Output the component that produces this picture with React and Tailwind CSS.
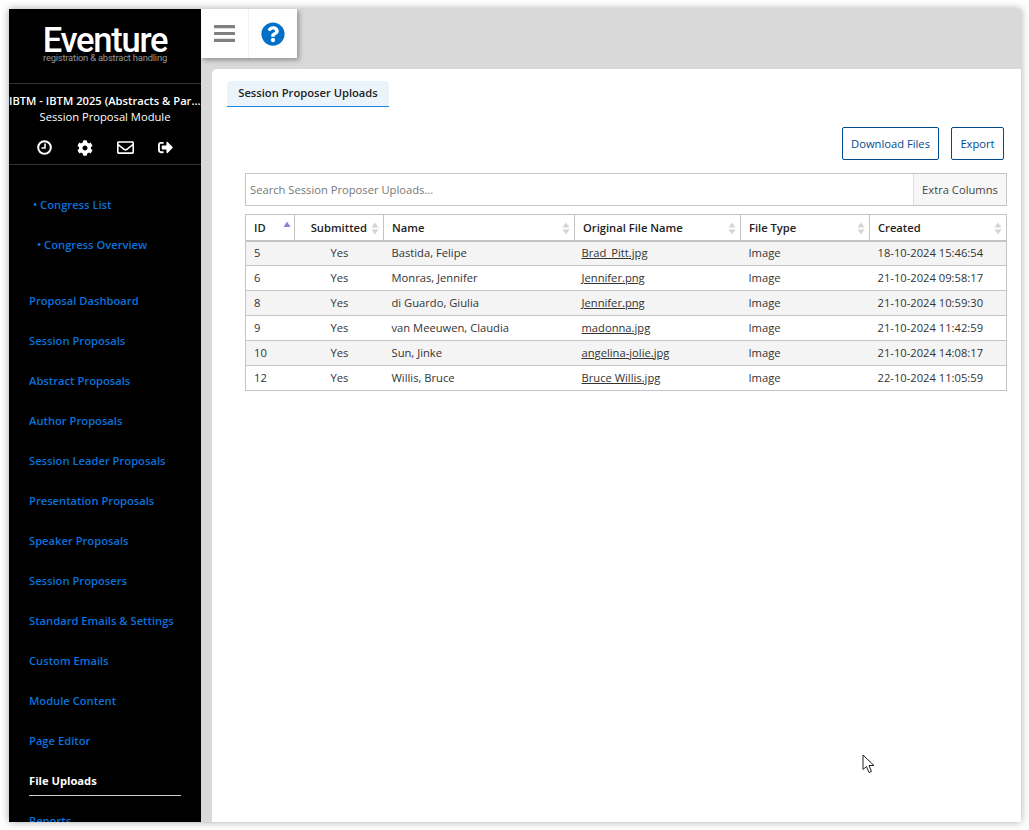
import { FaQuestionCircle, FaCog, FaRegEnvelope, FaSignOutAlt } from "react-icons/fa";

const topLinks = [
  { label: "• Congress List", indent: "pl-[24px]" },
  { label: "• Congress Overview", indent: "pl-[28px]" },
];

const navLinks = [
  "Proposal Dashboard",
  "Session Proposals",
  "Abstract Proposals",
  "Author Proposals",
  "Session Leader Proposals",
  "Presentation Proposals",
  "Speaker Proposals",
  "Session Proposers",
  "Standard Emails & Settings",
  "Custom Emails",
  "Module Content",
  "Page Editor",
];

const columns = [
  { label: "ID", width: "w-[49px]", sorted: true },
  { label: "Submitted", width: "w-[89px]", right: true },
  { label: "Name", width: "w-[191px]" },
  { label: "Original File Name", width: "w-[166px]" },
  { label: "File Type", width: "w-[129px]" },
  { label: "Created", width: "w-[137px]" },
];

const rows = [
  { id: 5, name: "Bastida, Felipe", file: "Brad_Pitt.jpg", created: "18-10-2024 15:46:54" },
  { id: 6, name: "Monras, Jennifer", file: "Jennifer.png", created: "21-10-2024 09:58:17" },
  { id: 8, name: "di Guardo, Giulia", file: "Jennifer.png", created: "21-10-2024 10:59:30" },
  { id: 9, name: "van Meeuwen, Claudia", file: "madonna.jpg", created: "21-10-2024 11:42:59" },
  { id: 10, name: "Sun, Jinke", file: "angelina-jolie.jpg", created: "21-10-2024 14:08:17" },
  { id: 12, name: "Willis, Bruce", file: "Bruce Willis.jpg", created: "22-10-2024 11:05:59" },
];

function SortArrows({ active }) {
  if (active) {
    return (
      <svg className="absolute right-[3px] top-[6px]" width="8" height="7" viewBox="0 0 8 7">
        <path d="M4 0.5 L7.5 6 L0.5 6 Z" fill="#8585e0" />
      </svg>
    );
  }
  return (
    <svg className="absolute right-[4px] top-[7px]" width="8" height="13" viewBox="0 0 8 13">
      <path d="M4 0.5 L7.5 5.5 L0.5 5.5 Z" fill="#d4d4d4" />
      <path d="M4 12.5 L7.5 7.5 L0.5 7.5 Z" fill="#d4d4d4" />
    </svg>
  );
}

function Sidebar() {
  return (
    <aside className="w-[192px] shrink-0 bg-black overflow-hidden">
      <div className="h-[75px] border-b border-[#333] flex flex-col items-center pt-[17px]">
        <div className="text-white text-[34.5px] leading-[28px] tracking-[-1.25px] font-['Roboto'] font-medium">Eventure</div>
        <div className="text-[#999] text-[9.4px] leading-[8px] font-['Roboto'] tracking-[-0.2px] whitespace-nowrap">registration &amp; abstract handling</div>
      </div>
      <div className="h-[81px] border-b border-[#333] pt-[9px] text-white text-center">
        <div className="text-[11.2px] leading-[16px] font-semibold truncate">IBTM - IBTM 2025 (Abstracts &amp; Participants)</div>
        <div className="text-[11.2px] leading-[15px]">Session Proposal Module</div>
        <div className="flex items-center mt-[15px] pl-[28px] gap-[24px]">
          <svg className="w-[15px] h-[15px] mr-[1px]" viewBox="0 0 15 15" fill="none" stroke="currentColor">
            <circle cx="7.5" cy="7.5" r="6.3" strokeWidth="2" />
            <path d="M8 3.5 V8 H4.5" strokeWidth="1.6" />
          </svg>
          <FaCog className="w-[16px] h-[16px]" />
          <FaRegEnvelope className="w-[17px] h-[17px]" />
          <FaSignOutAlt className="w-[15px] h-[15px]" />
        </div>
      </div>
      <div className="pt-[20px]">
        {topLinks.map((link) => (
          <div key={link.label} className={`h-[40px] ${link.indent} flex items-center text-[#0a72dc] text-[11.2px] font-semibold`}>
            {link.label}
          </div>
        ))}
      </div>
      <nav className="pt-[16px] px-[20px]">
        {navLinks.map((item) => (
          <div key={item} className="h-[40px] flex items-center text-[#0a72dc] text-[11.2px] font-semibold whitespace-nowrap">
            {item}
          </div>
        ))}
        <div className="h-[35px] pt-[7px] flex items-center text-white text-[11.2px] font-bold border-b border-[#ccc]">File Uploads</div>
        <div className="h-[40px] mt-[5px] flex items-center text-[#0a72dc] text-[11.2px] font-semibold">Reports</div>
      </nav>
    </aside>
  );
}

function UploadsTable() {
  return (
    <table className="table-fixed border-collapse w-[761px] mt-[8px] text-[11.2px] text-[#333]">
      <thead>
        <tr className="h-[26px] border-b-2 border-[#c4c4c4]">
          {columns.map((col) => (
            <th
              key={col.label}
              className={`relative ${col.width} border border-[#c4c4c4] border-b-0 font-semibold text-[#222] px-[8px] pt-[2px] ${col.right ? "text-right pr-[16px]" : "text-left"}`}
            >
              {col.label}
              <SortArrows active={col.sorted} />
            </th>
          ))}
        </tr>
      </thead>
      <tbody>
        {rows.map((row, i) => (
          <tr key={row.id} className={`h-[25px] border border-[#c4c4c4] ${i % 2 === 0 ? "bg-[#f4f4f4]" : "bg-white"}`}>
            <td className="px-[8px]">{row.id}</td>
            <td className="px-[8px] pl-[36px]">Yes</td>
            <td className="px-[8px]">{row.name}</td>
            <td className="pl-[7px] pr-[8px] underline">{row.file}</td>
            <td className="px-[8px]">Image</td>
            <td className="px-[8px]">{row.created}</td>
          </tr>
        ))}
      </tbody>
    </table>
  );
}

export default function App() {
  return (
    <div className="relative w-[1029px] h-[830px] bg-white p-[9px] pr-[8px] pb-[8px] overflow-hidden font-['Open_Sans',sans-serif]">
      <div className="flex h-full bg-[#d9d9d9] shadow-[0_0_8px_rgba(0,0,0,0.35)] overflow-hidden">
        <Sidebar />
        <div className="flex-1 min-w-0 flex flex-col">
          <header className="h-[49px] w-[96px] flex shrink-0 bg-white shadow-[2px_2px_5px_rgba(0,0,0,0.35)]">
            <div className="w-[48px] flex items-center justify-center border-r border-[#f0f0f0] text-[#808080]">
              <svg width="21" height="17" viewBox="0 0 21 17" fill="currentColor">
                <rect x="0" y="0" width="21" height="3.2" rx="0.5" />
                <rect x="0" y="6.9" width="21" height="3.2" rx="0.5" />
                <rect x="0" y="13.8" width="21" height="3.2" rx="0.5" />
              </svg>
            </div>
            <div className="w-[48px] flex items-center justify-center text-[#0070c9]">
              <FaQuestionCircle className="w-[24px] h-[24px]" />
            </div>
          </header>
          <main className="mt-[11px] ml-[11px] flex-1 bg-white rounded-tl-[5px] pt-[12px] pl-[15px]">
            <div className="flex w-[162px] items-center justify-center h-[26px] bg-[#ebf4fb] border-b border-[#1e88e5] rounded-t-[3px] text-[11.2px] font-semibold text-[#222]">
              Session Proposer Uploads
            </div>
            <div className="flex justify-end gap-[12px] mt-[20px] pr-[17px]">
              <button className="h-[33px] w-[97px] pt-[2px] border border-[#004a8f] rounded-[2px] text-[11.2px] text-[#004a8f]">Download Files</button>
              <button className="h-[33px] w-[53px] pt-[2px] border border-[#004a8f] rounded-[2px] text-[11.2px] text-[#004a8f]">Export</button>
            </div>
            <div className="ml-[18px] w-[762px]">
              <div className="flex h-[33px] mt-[13px] border border-[#c4c4c4] text-[11.2px]">
                <div className="flex-1 flex items-center pl-[4px] pt-[2px] text-[#777]">Search Session Proposer Uploads...</div>
                <div className="w-[93px] flex items-center justify-center pt-[2px] bg-[#f7f7f7] border-l border-[#ddd] text-[#444]">Extra Columns</div>
              </div>
              <UploadsTable />
            </div>
          </main>
        </div>
      </div>
      {/* mouse pointer left in the capture */}
      <svg className="absolute left-[862px] top-[754px]" width="14" height="20" viewBox="0 0 14 20">
        <path d="M1 1 L1 15.5 L4.5 12.5 L7 18.5 L9.5 17.5 L7 11.5 L12 11.5 Z" fill="#fff" stroke="#222" strokeWidth="1" />
      </svg>
    </div>
  );
}
